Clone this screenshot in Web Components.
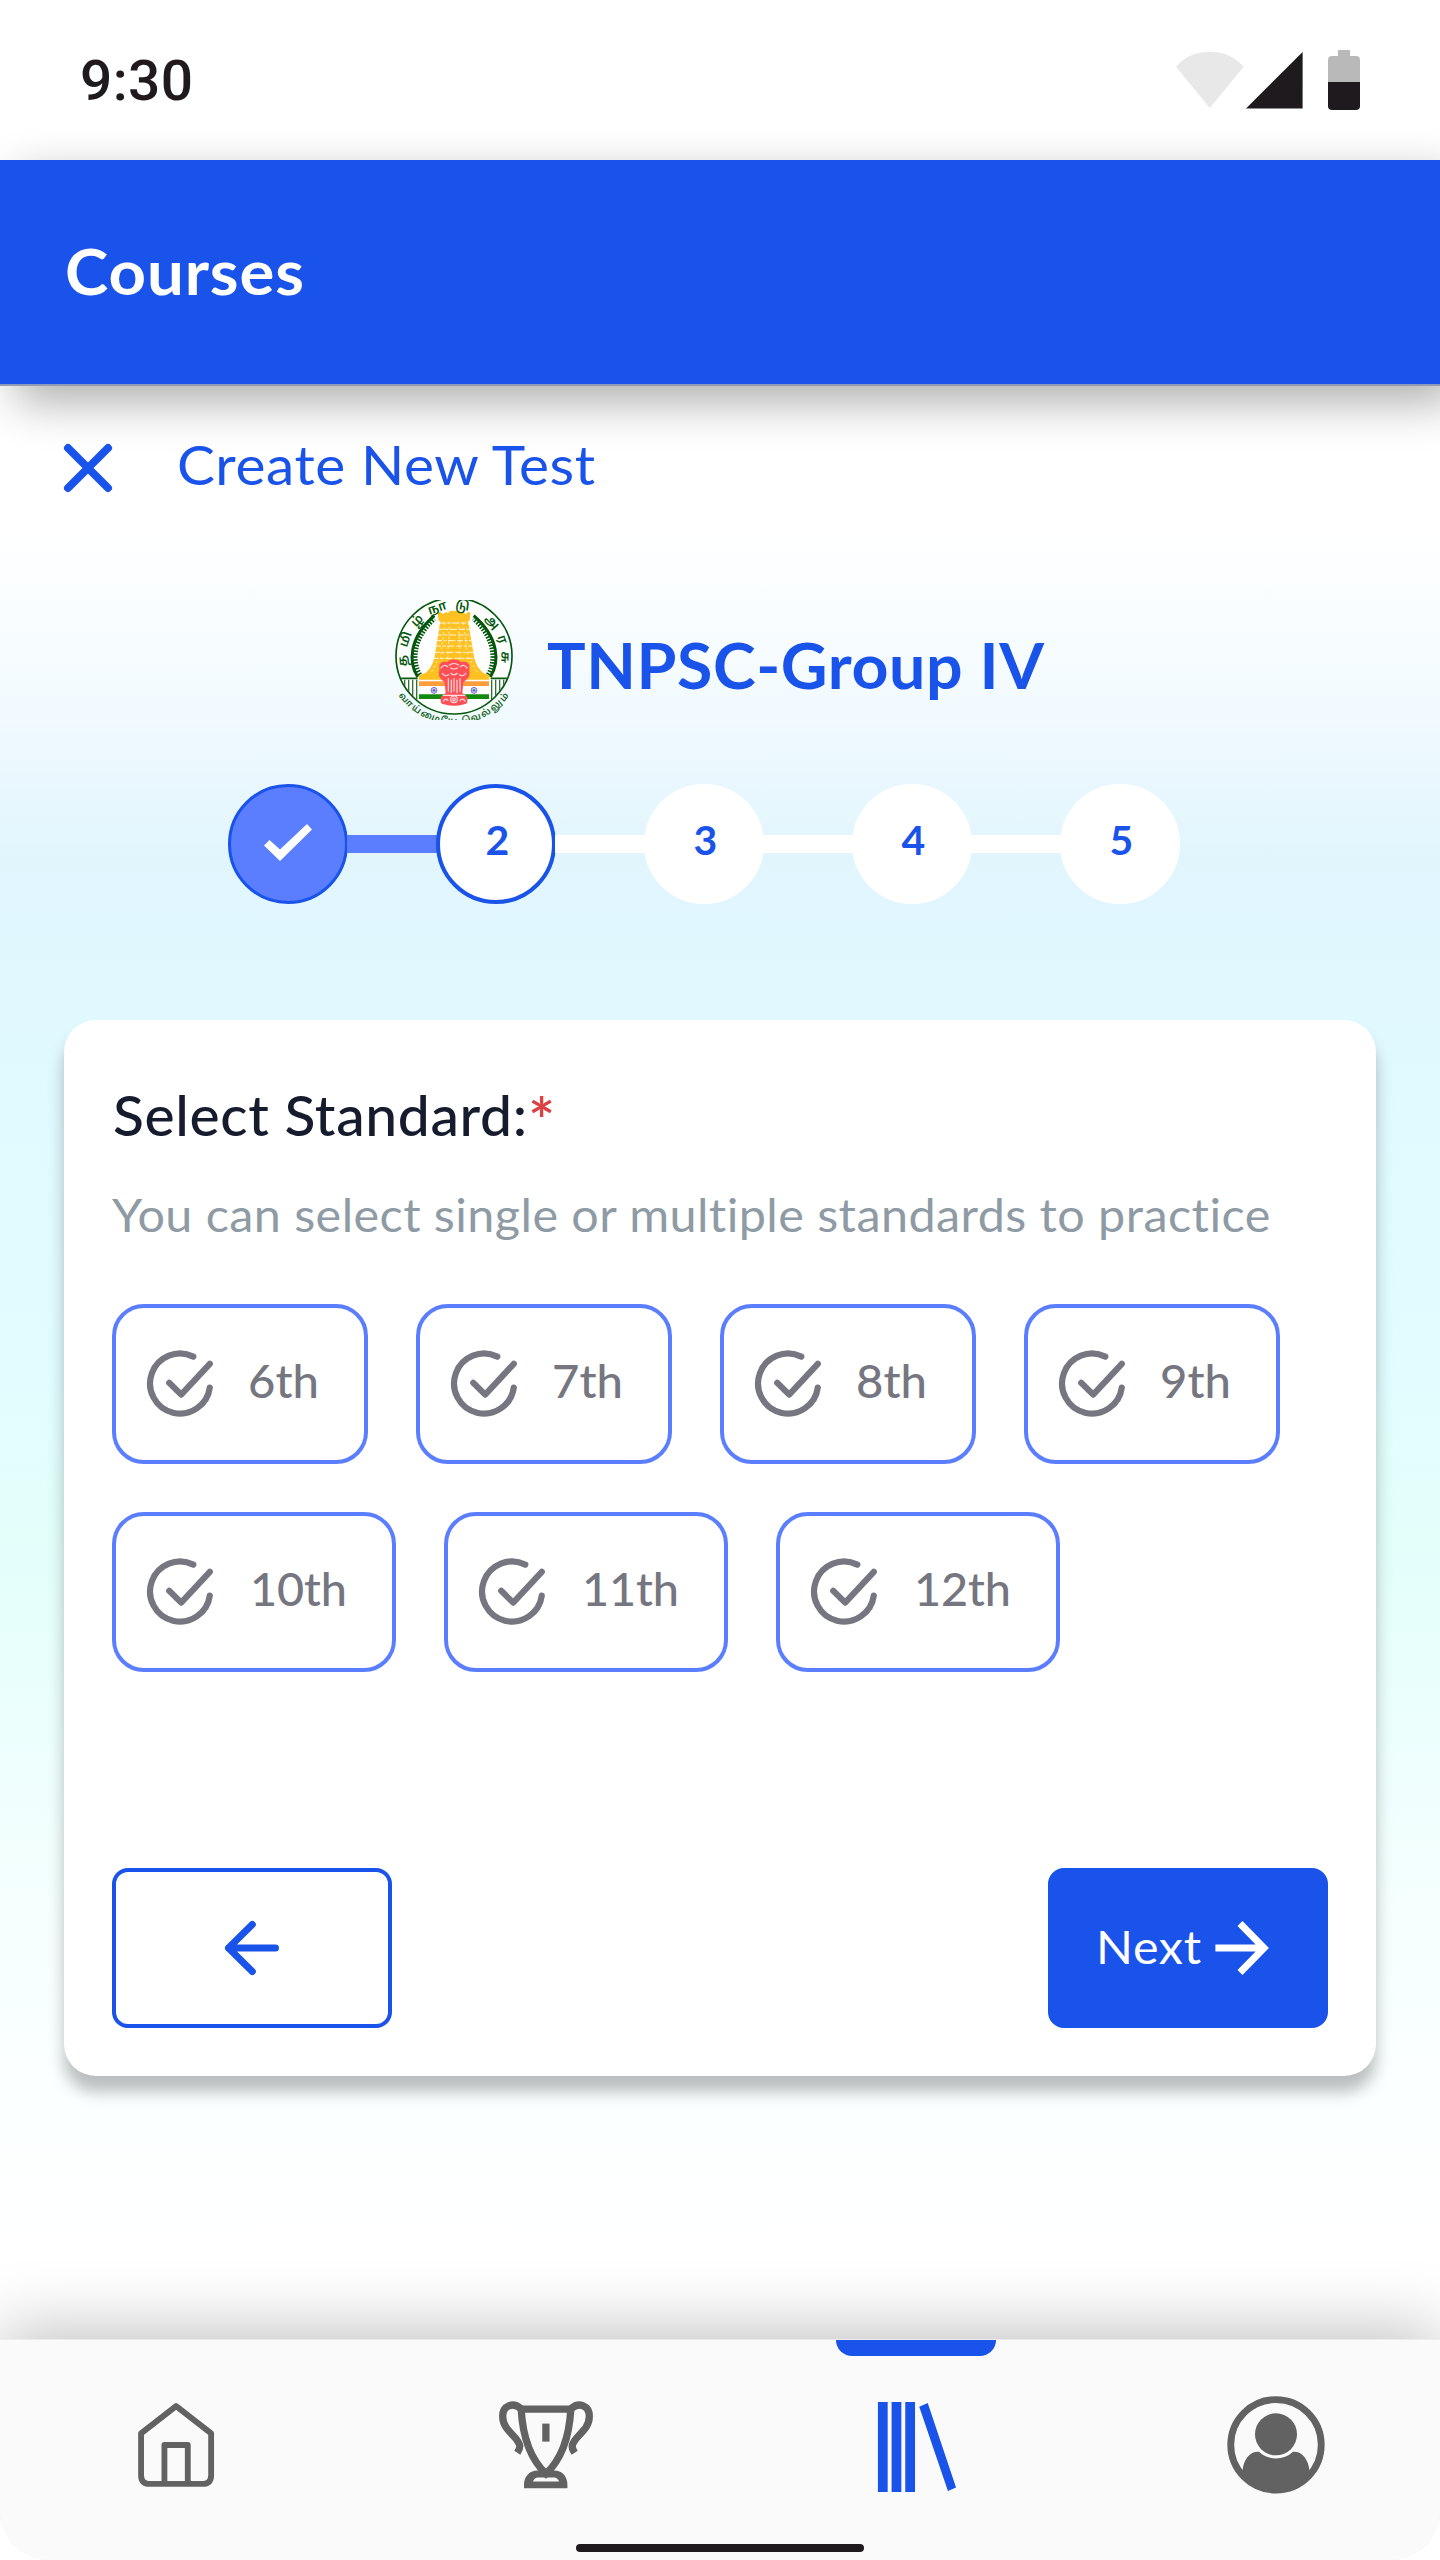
<!DOCTYPE html>
<html lang="en">
<head>
<meta charset="utf-8">
<title>Courses</title>
<style>
  body { margin: 0; width: 1440px; height: 2560px; overflow: hidden; background: #fff; font-family: Lato, "Noto Sans", sans-serif; }
</style>
</head>
<body>
<course-app></course-app>
<script>
const define = (name, html, setup) => {
  const tpl = document.createElement('template');
  tpl.innerHTML = html;
  customElements.define(name, class extends HTMLElement {
    connectedCallback() {
      if (this.shadowRoot) return;
      this.attachShadow({ mode: 'open' }).append(tpl.content.cloneNode(true));
      if (setup) setup(this, this.shadowRoot);
    }
  });
};

/* Single line of text whose glyph width and tracking are tuned to a given width */
define('fit-text', `
  <style>:host{display:block;white-space:nowrap} span{display:inline-block;transform-origin:0 50%}</style>
  <span><slot></slot></span>`, (el, root) => {
  const span = root.querySelector('span');
  const slot = root.querySelector('slot');
  const want = +el.getAttribute('width');
  const n = slot.assignedNodes({ flatten: true }).map(t => t.textContent).join('').length;
  const have = span.getBoundingClientRect().width;
  if (want && have && n > 1) {
    const scale = 1 + (want / have - 1) * 0.6;
    const ls = (want / scale - have) / (n - 1);
    span.style.letterSpacing = ls.toFixed(3) + 'px';
    span.style.transform = `scaleX(${scale.toFixed(4)})`;
    el.style.width = want + 'px';
  }
});

define('status-bar', `
  <style>
    :host{display:flex;height:160px;box-sizing:border-box;padding:0 76px 0 80px;justify-content:space-between;align-items:flex-start;color:#1e1a1d}
    .time{font:500 56px/162px Roboto,sans-serif}
    svg{display:block;margin-top:46px}
  </style>
  <fit-text class="time" width="113">9:30</fit-text>
  <svg width="192" height="68" viewBox="1172 46 192 68">
    <path d="M1176 66.8Q1189 51.8 1209.7 51.8T1243.6 66.8L1209.8 108Z" fill="#e8e8e8"/>
    <path d="M1302.6 52V108.4H1246Z" fill="#1e1a1d"/>
    <path d="M1328 82V60q0-4 4-4h6v-6h12v6h6q4 0 4 4v22Z" fill="#b9b9b9"/>
    <path d="M1328 82h32v24q0 4-4 4h-24q-4 0-4-4Z" fill="#1e1a1d"/>
  </svg>`);

define('app-header', `
  <style>
    :host{display:block;box-sizing:border-box;height:226px;background:#1a53e9;border-bottom:2px solid #8f9bb5;padding-left:65px;color:#fff;
      font-weight:700;font-size:63px;line-height:222px;box-shadow:16px 16px 43px rgba(0,0,0,.32)}
  </style>
  <fit-text width="239"><slot></slot></fit-text>`);

define('page-title', `
  <style>
    :host{display:flex;align-items:flex-start;padding:36px 0 0 60px;height:178px;box-sizing:border-box;color:#1a53e9;font-size:55px;line-height:84px}
    svg{display:block;margin:18px 61px 0 0}
  </style>
  <svg width="56" height="56" viewBox="60 440 56 56" fill="none" stroke="#1a53e9" stroke-width="8" stroke-linecap="round"><path d="M68 448 108 488M108 448 68 488"/></svg>
  <fit-text width="418"><slot></slot></fit-text>`);

define('state-emblem', `
  <style>:host{display:block;width:120px;height:120px} svg{display:block} text{font-family:"Noto Sans Tamil","Noto Sans",sans-serif}</style>
  <svg width="120" height="120" viewBox="45 45 360 360">
    <defs>
      <clipPath id="in"><circle cx="222" cy="213" r="172"/></clipPath>
      <path id="top" d="M83 243A142 142 0 1 1 361 243"/>
      <path id="bot" d="M56 331A204 204 0 0 0 388 331"/>
    </defs>
    <circle cx="222" cy="213" r="173" fill="#fff"/>
    <g clip-path="url(#in)">
      <path d="M45 280H400V400H45Z" fill="#fff"/>
      <path d="M47 280H113M332 280H398" stroke="#0b5a12" stroke-width="5"/>
      <path d="M62 284V345M74 284V345M86 284V350M98 284V352M110 284V352M335 284V352M347 284V352M359 284V350M371 284V345M383 284V345" stroke="#2e7236" stroke-width="4"/>
    </g>
    <g fill="none" stroke="#04570c">
      <path d="M113 276C85 232 86 158 163 92" stroke-width="9"/>
      <path d="M331 276C359 232 358 158 281 92" stroke-width="9"/>
      <path d="M118 270C94 230 95 160 162 100" stroke-width="18" stroke-dasharray="5 4"/>
      <path d="M326 270C350 230 349 160 282 100" stroke-width="18" stroke-dasharray="5 4"/>
      <circle cx="222" cy="213" r="174" stroke-width="5"/>
    </g>
    <g fill="#ffc022">
      <path d="M173 84Q182 76 188 88Q196 78 204 84Q211 72 222 79Q233 72 241 84Q249 78 257 88Q264 76 271 84L269 108H264L283 220Q290 248 310 264L328 271V284H117V271L137 264Q155 248 163 220L181 108H176Z"/>
    </g>
    <g stroke="#fff8df" stroke-width="3" stroke-dasharray="17 5 9 4 22 6">
      <path d="M179 114H267M174 133H270M171 150H273M169 167H276M166 183H278M163 202H281M160 220H284"/>
    </g>
    <g stroke="#fff1bd" stroke-width="3" stroke-dasharray="7 8">
      <path d="M195 112 181 222M209 110 203 222M235 110 242 222M250 112 264 222M172 228 154 262M272 228 292 262"/>
    </g>
    <path d="M117 289H327V304H117Z" fill="#ff9c3c"/>
    <path d="M117 304H327V327H117Z" fill="#fff"/>
    <path d="M117 328H327V342H117Z" fill="#12890f"/>
    <g fill="none" stroke="#4747b8" stroke-width="2">
      <circle cx="162" cy="316" r="9"/><circle cx="282" cy="316" r="9"/>
      <path d="M162 307v18M153 316h18M156 310l12 12M168 310l-12 12M282 307v18M273 316h18M276 310l12 12M288 310l-12 12"/>
    </g>
    <g fill="#ff5058">
      <path d="M178 239Q187 226 201 231Q210 221 222 224Q235 221 244 231Q259 226 268 239V257Q273 274 257 286L250 292L247 324L262 337V352Q260 358 252 358Q222 367 192 358Q184 358 182 350V337L197 324L194 292L187 286Q172 272 178 257Z"/>
    </g>
    <g fill="none" stroke="#ffdede" stroke-width="3.5">
      <path d="M182 250Q192 235 204 246M262 250Q252 235 240 246M207 241Q222 230 237 241M211 248Q222 256 233 248M186 264Q195 278 207 268M258 264Q249 278 237 268M212 264Q222 275 232 264"/>
      <path d="M205 280V320M214 284V324M222 280V320M231 284V324M240 280V320M188 331H256"/>
      <circle cx="222" cy="343" r="10"/><circle cx="222" cy="343" r="4"/><path d="M190 350Q196 336 205 348M239 348Q248 336 256 350"/>
    </g>
    <text font-size="38" font-weight="600" fill="#04570c"><textPath href="#top" textLength="495">தமிழ்நாடு அரசு</textPath></text>
    <text font-size="28" font-weight="600" fill="#1c6524"><textPath href="#bot" textLength="386">வாய்மையே வெல்லும்</textPath></text>
  </svg>`);

define('exam-title', `
  <style>
    :host{display:flex;height:120px;margin-top:36px;padding-left:395px;align-items:center;gap:32px;color:#1a53e9;font-weight:700;font-size:63px;line-height:76px}
    fit-text{margin-top:9px}
  </style>
  <state-emblem></state-emblem><fit-text width="497"><slot></slot></fit-text>`);

define('progress-step', `
  <style>
    :host{display:flex;align-items:center}
    .bar{width:90px;height:18px;margin:0 -1px;background:#fff}
    .dot{box-sizing:border-box;width:120px;height:120px;border-radius:50%;background:#fff;border:4px solid #fff;color:#1a53e9;
      text-align:center;font-weight:700;font-size:41px;line-height:104px;text-indent:3px}
    :host([first]) .bar{display:none}
    :host([linked]) .bar{background:#5a7eff}
    :host([current]) .dot{border-color:#1a53e9}
    :host([done]) .dot{border:3px solid #1a53e9;background:#5a7eff}
    svg{display:none}
    :host([done]) svg{display:block}
  </style>
  <div class="bar"></div>
  <div class="dot"><slot></slot><svg width="114" height="114" viewBox="231 787 114 114"><path d="M264 845.5 269.5 840 280 849.5 307 824 312 829.5 280 861Z" fill="#fff"/></svg></div>`);

define('progress-steps', `
  <style>:host{display:flex;margin-top:64px;padding-left:228px;height:120px}</style>
  <progress-step first done></progress-step><progress-step linked current>2</progress-step><progress-step>3</progress-step><progress-step>4</progress-step><progress-step>5</progress-step>`);

define('standard-chip', `
  <style>
    :host{display:flex;box-sizing:border-box;width:256px;height:160px;border:4px solid #5a7eff;border-radius:32px;padding:40px 0 0 28px;color:#757680;
      font-weight:500;font-size:47px;line-height:72px}
    :host([wide]){width:284px}
    svg{display:block;margin-right:32px;flex:none}
    .t{margin-top:-4px}
    :host([wide]) .t{margin-left:2px}
  </style>
  <svg width="72" height="72" viewBox="0 0 72 72" fill="none" stroke="#757680" stroke-width="6.2" stroke-linecap="round" stroke-linejoin="round">
    <path d="M49.3 8.6A30 30 0 1 0 65.8 39.5"/><path d="M25.2 34.8 37.2 46.6 65.8 15.8"/></svg>
  <div class="t"><slot></slot></div>`);

define('nav-button', `
  <style>
    :host{display:flex;box-sizing:border-box;width:280px;height:160px;border:4px solid #1a53e9;border-radius:16px;align-items:center;justify-content:center;
      font-size:47px;line-height:60px;color:#fff}
    :host([primary]){background:#1a53e9;justify-content:flex-start;padding-left:44px}
    svg{display:block}
    .b{display:none;margin-left:11px}
    :host([primary]) .a{display:none}
    :host([primary]) .b{display:block}
    .t{margin-top:-4px}
  </style>
  <svg class="a" width="64" height="64" viewBox="220 1916 64 64" fill="none" stroke="#1a53e9" stroke-width="7" stroke-linecap="round" stroke-linejoin="round"><path d="M275.500 1948H228.5M252.3 1924.5 228.5 1948 252.3 1971.5"/></svg>
  <div class="t"><slot></slot></div>
  <svg class="b" width="60" height="64" viewBox="1212 1916 60 64" fill="none" stroke="#fff" stroke-width="7"><path d="M1215.4 1948H1264M1240 1923.5 1264 1948 1240 1972.5"/></svg>`);

define('standard-card', `
  <style>
    :host{display:flex;flex-direction:column;box-sizing:border-box;width:1312px;height:1056px;margin:116px 0 0 64px;padding:60px 48px 48px;background:#fff;border-radius:32px;
      box-shadow:0 16px 16px rgba(0,0,0,.26)}
    .h{display:flex;height:70px;font-size:55px;line-height:71px;color:#161b2d;font-weight:500;padding-left:1px}
    .h b{color:#dc4045;font-weight:600;font-size:64px;margin-left:1px;line-height:80px}
    .s{margin-top:32px;height:60px;font-size:47px;line-height:64px;color:#8f9ba4}
    .r{display:flex;gap:48px;margin-top:62px;height:160px}
    .r + .r{margin-top:48px}
    .f{display:flex;justify-content:space-between;margin-top:auto}
  </style>
  <div class="h"><fit-text width="414">Select Standard:</fit-text><b>*</b></div>
  <fit-text class="s" width="1160">You can select single or multiple standards to practice</fit-text>
  <div class="r"><standard-chip><fit-text width="71">6th</fit-text></standard-chip><standard-chip><fit-text width="71">7th</fit-text></standard-chip><standard-chip><fit-text width="71">8th</fit-text></standard-chip><standard-chip><fit-text width="71">9th</fit-text></standard-chip></div>
  <div class="r"><standard-chip wide><fit-text width="97">10th</fit-text></standard-chip><standard-chip wide><fit-text width="97">11th</fit-text></standard-chip><standard-chip wide><fit-text width="97">12th</fit-text></standard-chip></div>
  <div class="f"><nav-button></nav-button><nav-button primary><fit-text width="105">Next</fit-text></nav-button></div>`);

define('bottom-nav', `
  <style>
    :host{display:flex;flex-direction:column;box-sizing:border-box;height:221px;margin-top:auto;background:#fafafa;border-top:1px solid #ededed;
      box-shadow:0 -8px 64px rgba(0,0,0,.25);clip-path:inset(-120px 0 0 0 round 0 0 48px 48px)}
    .i{display:flex;height:160px;padding-left:130px}
    .tab{display:flex;flex-direction:column;align-items:center}
    .cup{margin-left:264px}
    .on{margin-left:238px}
    .me{margin-left:224px}
    .on::before{content:"";width:160px;height:16px;border-radius:0 0 16px 16px;background:#1a53e9}
    svg{display:block;margin-top:51px}
    .on svg{margin-top:35px}
    .pill{width:288px;height:8px;border-radius:4px;background:#1e1a1d;margin:44px auto 0}
  </style>
  <div class="i">
    <div class="tab"><svg width="100" height="112" viewBox="130 2390 100 112" fill="none" stroke="#626262" stroke-width="6">
      <path d="M140 2433.5 176 2405.5 212 2433.5V2476.500Q212 2485.500 203 2485.500H149Q140 2485.500 140 2476.500Z" stroke-linejoin="round"/>
      <path d="M164 2485.500V2445.500H188V2485.500" stroke-linejoin="round"/></svg></div>
    <div class="tab cup"><svg width="104" height="112" viewBox="495 2390 104 112" fill="none" stroke="#626262" stroke-width="7.500">
      <path d="M521.500 2408.600H572.500C571 2436 563 2460 547 2475C531 2460 523 2436 521.500 2408.600Z"/>
      <path d="M521 2408C513 2401 502.500 2405 502.500 2416C502.500 2431 518 2436 520 2446Q520.500 2449 517.500 2453.500"/>
      <path d="M573 2408C581 2401 591.500 2405 591.500 2416C591.500 2431 576 2436 574 2446Q573.500 2449 576.500 2453.500"/>
      <path d="M546.900 2423.500V2442"/>
      <path d="M524.400 2490V2486C524.400 2477 531 2471.600 538 2471.600H555.500C563 2471.600 569 2477 569 2486V2490ZM533.500 2483H560.500Q558.500 2479 555.500 2479H538.500Q535.500 2479 533.500 2483Z" fill="#626262" fill-rule="evenodd" stroke="none"/></svg></div>
    <div class="tab on"><svg width="100" height="112" viewBox="866 2390 100 112" fill="#1a53e9">
      <path d="M877 2401.300h10v92h-10zM891 2401.300h10v92h-10zM905 2401.300h10v92h-10zM919.300 2406 928 2402.300 957 2488.700 948.700 2492.300Z"/></svg></div>
    <div class="tab me"><svg width="112" height="112" viewBox="1220 2390 112 112">
      <circle cx="1276" cy="2445.300" r="46.500" fill="none" stroke="#626262" stroke-width="7"/>
      <circle cx="1276" cy="2434.500" r="21.600" fill="#626262"/>
      <path d="M1241.600 2471.500C1243 2460 1249 2452 1258.500 2452.500A25.500 25.500 0 0 0 1293.500 2452.500C1303 2452 1309 2460 1310.400 2471.500L1308 2478A46 46 0 0 1 1244 2478Z" fill="#626262"/></svg></div>
  </div>
  <div class="pill"></div>`);

define('course-app', `
  <style>
    :host{display:flex;flex-direction:column;width:1440px;height:2560px;overflow:hidden;
      background:linear-gradient(180deg,#fff 530px,#f4fbff 680px,#e1f5fd 860px,#e0f9ff 1040px,#e1fdff 1380px,#e2fffa 1530px,#effffd 1780px,#faffff 2050px,#fff 2240px)}
    app-header,bottom-nav{flex:none}
  </style>
  <status-bar></status-bar>
  <app-header>Courses</app-header>
  <page-title>Create New Test</page-title>
  <exam-title>TNPSC-Group IV</exam-title>
  <progress-steps></progress-steps>
  <standard-card></standard-card>
  <bottom-nav></bottom-nav>`);
</script>
</body>
</html>
